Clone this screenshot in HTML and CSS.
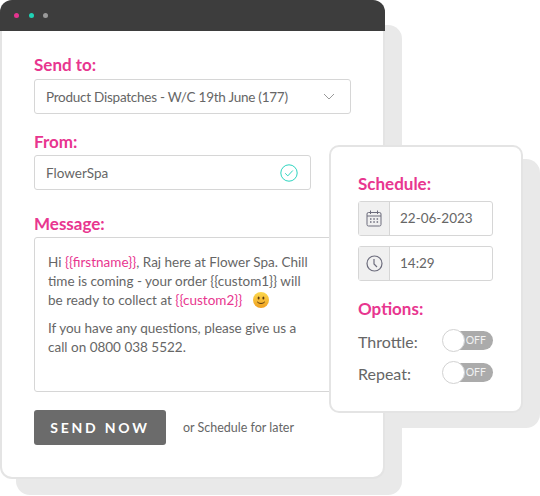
FILE: index.html
```html
<!DOCTYPE html>
<html lang="en">
<head>
    <meta charset="UTF-8">
    <meta name="viewport" content="width=device-width, initial-scale=1.0">
    <title>Send message</title>
    <link rel="stylesheet" href="styles.css">
</head>
<body>
    <div class="stage">
        <div class="backing backing-window"></div>
        <div class="backing backing-card"></div>

        <div class="window">
            <div class="titlebar">
                <span class="dot dot-pink"></span>
                <span class="dot dot-teal"></span>
                <span class="dot dot-grey"></span>
            </div>
            <div class="form">
                <h3 class="label label-send">Send to:</h3>
                <div class="field field-select">
                    <span>Product Dispatches - W/C 19th June (177)</span>
                    <svg class="chevron" width="12" height="7" viewBox="0 0 12 7"><path d="M1 1l5 5 5-5" fill="none" stroke="#999" stroke-width="1"/></svg>
                </div>
                <h3 class="label label-from">From:</h3>
                <div class="field field-from">
                    <span>FlowerSpa</span>
                    <svg width="18" height="18" viewBox="0 0 18 18"><circle cx="9" cy="9" r="8.2" fill="none" stroke="#2dd4bf" stroke-width="1"/><path d="M5.2 9.3l2.6 2.6 5-5.4" fill="none" stroke="#2dd4bf" stroke-width="1"/></svg>
                </div>
                <h3 class="label label-message">Message:</h3>
                <div class="message-box">
                    <p>Hi <span class="tag">{{firstname}}</span>, Raj here at Flower Spa. Chill<br>time is coming - your order {{custom1}} will<br>be ready to collect at <span class="tag">{{custom2}}</span>
                        <svg class="emoji" width="16" height="16" viewBox="0 0 16 16">
                            <defs><linearGradient id="face" x1="0" y1="0" x2="0" y2="1"><stop offset="0" stop-color="#fbd84e"/><stop offset="1" stop-color="#f0a020"/></linearGradient></defs>
                            <circle cx="8" cy="8" r="8" fill="url(#face)"/>
                            <ellipse cx="5.6" cy="6" rx="1" ry="1.5" fill="#5a3a10"/>
                            <ellipse cx="10.4" cy="6" rx="1" ry="1.5" fill="#5a3a10"/>
                            <path d="M4.2 9.8c1.8 2.2 5.8 2.2 7.6 0" fill="none" stroke="#5a3a10" stroke-width="1"/>
                        </svg>
                    </p>
                    <p>If you have any questions, please give us a<br>call on 0800 038 5522.</p>
                </div>
                <div class="actions">
                    <button class="send-button" type="button">SEND NOW</button>
                    <span class="later">or Schedule for later</span>
                </div>
            </div>
        </div>

        <div class="schedule-card">
            <h3 class="label">Schedule:</h3>
            <div class="addon-field">
                <span class="addon">
                    <svg width="16" height="17" viewBox="0 0 16 17" fill="none" stroke="#6c6c7c" stroke-width="1"><rect x="1" y="2.5" width="14" height="13.5" rx="1.5"/><path d="M1 6h14M4.5 .5v3.5M11.5 .5v3.5"/><path d="M4 9h1.5M7.3 9h1.5M10.6 9h1.5M4 12h1.5M7.3 12h1.5M10.6 12h1.5" stroke-width="1.4"/></svg>
                </span>
                <span class="addon-value">22-06-2023</span>
            </div>
            <div class="addon-field">
                <span class="addon">
                    <svg width="17" height="17" viewBox="0 0 17 17" fill="none" stroke="#6c6c7c" stroke-width="1.2"><circle cx="8.5" cy="8.5" r="7.5"/><path d="M8 4v5l3 3"/></svg>
                </span>
                <span class="addon-value">14:29</span>
            </div>
            <h3 class="label label-options">Options:</h3>
            <div class="option">
                <span>Throttle:</span>
                <span class="toggle"><span class="knob"></span><span class="toggle-text">OFF</span></span>
            </div>
            <div class="option">
                <span>Repeat:</span>
                <span class="toggle"><span class="knob"></span><span class="toggle-text">OFF</span></span>
            </div>
        </div>
    </div>
</body>
</html>
```

FILE: styles.css
```css
body {
    margin: 0;
    background: #fff;
    font-family: Lato, "Open Sans", sans-serif;
    color: #666;
}

.stage {
    position: relative;
    width: 540px;
    height: 496px;
    overflow: hidden;
}

/* grey offset panels sitting behind the window and the card */
.backing {
    position: absolute;
    background: #e9e9e9;
    border-radius: 14px;
}

.backing-window {
    left: 16px;
    top: 25px;
    width: 386px;
    height: 470px;
}

.backing-card {
    left: 347px;
    top: 159px;
    width: 193px;
    height: 269px;
}

.window {
    position: relative;
    width: 385px;
    height: 479px;
    box-sizing: border-box;
    background: #fff;
    border: 2px solid #e4e4e4;
    border-top: none;
    border-radius: 12px;
}

.titlebar {
    height: 31px;
    margin: 0 -2px;
    padding-left: 14px;
    display: flex;
    align-items: center;
    gap: 9.5px;
    background: #3d3d3d;
    border-radius: 12px 12px 0 0;
}

.dot {
    width: 5px;
    height: 5px;
    border-radius: 50%;
}

.dot-pink { background: #e5348f; }
.dot-teal { background: #1fd3b5; }
.dot-grey { background: #9a9a9a; }

.form {
    padding: 23px 0 0 32px;
}

.label {
    margin: 0;
    font-size: 17px;
    line-height: 22px;
    font-weight: 700;
    color: #e8368f;
}

.field {
    height: 35px;
    box-sizing: border-box;
    margin-top: 3px;
    padding: 0 11px;
    display: flex;
    align-items: center;
    justify-content: space-between;
    font-size: 13.5px;
    background: #fff;
    border: 1px solid #d6d6d6;
    border-radius: 3px;
}

.field-select {
    width: 317px;
    padding-right: 15px;
    letter-spacing: -0.25px;
}

.field-from {
    width: 277px;
    padding-right: 12px;
}

.label-from {
    margin-top: 17px;
}

.label-from + .field {
    margin-top: 2px;
}

.label-message {
    margin-top: 23px;
}

.message-box {
    width: 320px;
    height: 155px;
    box-sizing: border-box;
    margin-top: 2px;
    padding: 15px 13px;
    font-size: 13.5px;
    line-height: 19px;
    border: 1px solid #d6d6d6;
    border-radius: 3px;
}

.message-box p {
    margin: 0 0 9px;
}

.tag {
    color: #e8368f;
}

.emoji {
    margin-left: 7px;
    vertical-align: -3px;
}

.actions {
    margin-top: 18px;
    display: flex;
    align-items: center;
}

.send-button {
    width: 132px;
    height: 35px;
    padding: 0;
    border: none;
    border-radius: 3px;
    background: #6b6b6b;
    color: #fff;
    font-family: inherit;
    font-size: 14px;
    font-weight: 700;
    letter-spacing: 2.8px;
}

.later {
    margin-left: 17px;
    font-size: 12.5px;
}

.schedule-card {
    position: absolute;
    left: 329px;
    top: 145px;
    width: 194px;
    height: 268px;
    box-sizing: border-box;
    padding: 26px 0 0 27px;
    background: #fff;
    border: 2px solid #e4e4e4;
    border-radius: 10px;
}

.addon-field {
    width: 135px;
    height: 35px;
    box-sizing: border-box;
    margin-top: 6px;
    display: flex;
    font-size: 13.5px;
    border: 1px solid #d6d6d6;
    border-radius: 3px;
}

.addon-field + .addon-field {
    margin-top: 10px;
}

.addon {
    width: 30px;
    display: flex;
    align-items: center;
    justify-content: center;
    background: #f0f0f0;
    border-right: 1px solid #d6d6d6;
}

.addon-value {
    padding-left: 10px;
    line-height: 33px;
}

.label-options {
    margin-top: 17px;
}

.option {
    width: 135px;
    height: 32px;
    display: flex;
    align-items: center;
    justify-content: space-between;
    font-size: 16px;
}

.label-options + .option {
    margin-top: 5px;
}

.toggle {
    width: 50px;
    height: 19px;
    margin-top: -2px;
    position: relative;
    background: #ababab;
    border-radius: 10px;
}

.knob {
    position: absolute;
    left: -1px;
    top: -2px;
    width: 21px;
    height: 21px;
    background: #fff;
    border: 1px solid #d2d2d2;
    border-radius: 50%;
}

.toggle-text {
    position: absolute;
    right: 7px;
    top: 0;
    font-size: 10.5px;
    line-height: 19px;
    color: #f2f2f2;
}
```
